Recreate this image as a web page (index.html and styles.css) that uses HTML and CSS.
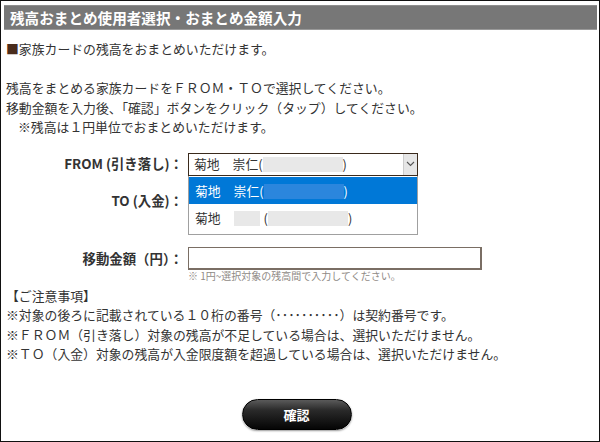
FILE: index.html
```html
<!DOCTYPE html>
<html lang="ja">
<head>
<meta charset="utf-8">
<title>残高おまとめ</title>
<link rel="stylesheet" href="styles.css">
</head>
<body>
<div class="frame">
  <h1 class="title">残高おまとめ使用者選択・おまとめ金額入力</h1>
  <p class="lead"><span class="sq">■</span>家族カードの残高をおまとめいただけます。</p>
  <p class="intro">残高をまとめる家族カードをＦＲＯＭ・ＴＯで選択してください。<br>移動金額を入力後、「確認」ボタンをクリック（タップ）してください。<br><span class="indent">※残高は１円単位でおまとめいただけます。</span></p>

  <div class="form">
    <div class="row row-from">
      <div class="label">FROM (引き落し)：</div>
      <div class="field">
        <div class="select">
          <span class="opt-text">菊地　崇仁(<span class="blur blur-id"></span>)</span>
          <span class="arrow"><svg width="9" height="6" viewBox="0 0 9 6"><polyline points="1,1 4.5,4.5 8,1" fill="none" stroke="#555" stroke-width="1.1"/></svg></span>
        </div>
        <ul class="dropdown">
          <li class="item selected">菊地　崇仁(<span class="blur blur-id sel"></span>)</li>
          <li class="item">菊地　<span class="blur blur-name"></span>(<span class="blur blur-id"></span>)</li>
        </ul>
      </div>
    </div>
    <div class="row row-to">
      <div class="label">TO (入金)：</div>
      <div class="field">
        <div class="select hidden-under"></div>
      </div>
    </div>
    <div class="row row-amount">
      <div class="label">移動金額（円）：</div>
      <div class="field">
        <div class="input"></div>
        <div class="hint">※ 1円~選択対象の残高間で入力してください。</div>
      </div>
    </div>
  </div>

  <div class="notes">
    <p>【ご注意事項】</p>
    <p>※対象の後ろに記載されている１０桁の番号（･･････････）は契約番号です。</p>
    <p>※ＦＲＯＭ（引き落し）対象の残高が不足している場合は、選択いただけません。</p>
    <p>※ＴＯ（入金）対象の残高が入金限度額を超過している場合は、選択いただけません。</p>
  </div>

  <div class="actions">
    <button class="btn" type="button">確認</button>
  </div>
</div>
</body>
</html>
```

FILE: styles.css
```css
* { box-sizing: border-box; }
html, body { margin: 0; padding: 0; background: #fff; }
body {
  font-family: "Noto Sans CJK JP", "Noto Sans", sans-serif;
  font-size: 12.85px;
  color: #333;
  line-height: 19.5px;
}
.frame {
  width: 600px;
  height: 442px;
  border: 1px solid #111;
  position: relative;
  overflow: hidden;
}
.title {
  margin: 4px 2px 0 3px;
  height: 25px;
  background: #777;
  border-top: 1px solid #8e8e8e;
  border-bottom: 1px solid #999;
  color: #fff;
  font-size: 14.6px;
  font-weight: bold;
  line-height: 23px;
  padding-left: 6px;
}
p { margin: 0; }
.lead { margin: 9px 0 0 5px; }
.sq { color: #4a2c1c; }
.intro { margin: 19.5px 0 0 5px; }
.indent { padding-left: 12px; }

.form { margin-top: 16px; }
.row {
  display: grid;
  grid-template-columns: 182px 1fr;
  column-gap: 5px;
  align-items: center;
}
.label {
  text-align: right;
  font-weight: bold;
  font-size: 13.4px;
  color: #333;
  white-space: nowrap;
}
.field { position: relative; }
.select {
  width: 230px;
  height: 23px;
  border: 1px solid #3a2a1c;
  background: #fff;
  display: flex;
  align-items: center;
  justify-content: space-between;
  padding-left: 5px;
}
.opt-text { white-space: nowrap; }
.arrow {
  width: 14px;
  height: 21px;
  background: #e6e6e6;
  border-left: 1px solid #ccc;
  display: flex;
  align-items: center;
  justify-content: center;
}
.blur {
  display: inline-block;
  height: 15px;
  vertical-align: -3px;
  background: #e8e8e8;
}
.blur-id { width: 80px; }
.blur-name { width: 26px; margin-right: 4px; }
.blur.sel { background: #2b86dd; }

.dropdown {
  position: absolute;
  left: 0;
  top: 23px;
  width: 230px;
  margin: 0;
  padding: 0;
  list-style: none;
  border: 1px solid #a0a0a0;
  border-top: 0;
  background: #fff;
  z-index: 2;
}
.item {
  height: 30px;
  line-height: 28px;
  padding-left: 6px;
  white-space: nowrap;
}
.item.selected {
  background: #0078d7;
  color: #fff;
  height: 27px;
  line-height: 27px;
  margin-top: 1px;
}

.row-from { height: 23px; }
.row-to { margin-top: 14px; height: 23px; }
.row-amount { margin-top: 34px; align-items: start; }
.row-amount .label { line-height: 23px; }
.input {
  width: 294px;
  height: 23px;
  border: 1px solid #7a6e64;
  border-width: 1px 2px 2px 1px;
  background: #fff;
}
.hint {
  font-size: 10px;
  line-height: 12px;
  color: #8f8a86;
  margin-top: 0;
}

.notes { margin: 4px 0 0 5px; line-height: 19.5px; }

.actions {
  display: flex;
  justify-content: center;
  margin-top: 35px;
  padding-right: 7px;
}
.btn {
  width: 110px;
  height: 31px;
  border-radius: 16px;
  border: 1px solid #000;
  background: linear-gradient(#5a5a5a 0%, #2a2a2a 35%, #050505 100%);
  color: #fff;
  font-family: "Noto Sans CJK JP", sans-serif;
  font-weight: bold;
  font-size: 13px;
  box-shadow: 0 1px 2px rgba(0,0,0,0.4);
  padding: 0;
}
```
